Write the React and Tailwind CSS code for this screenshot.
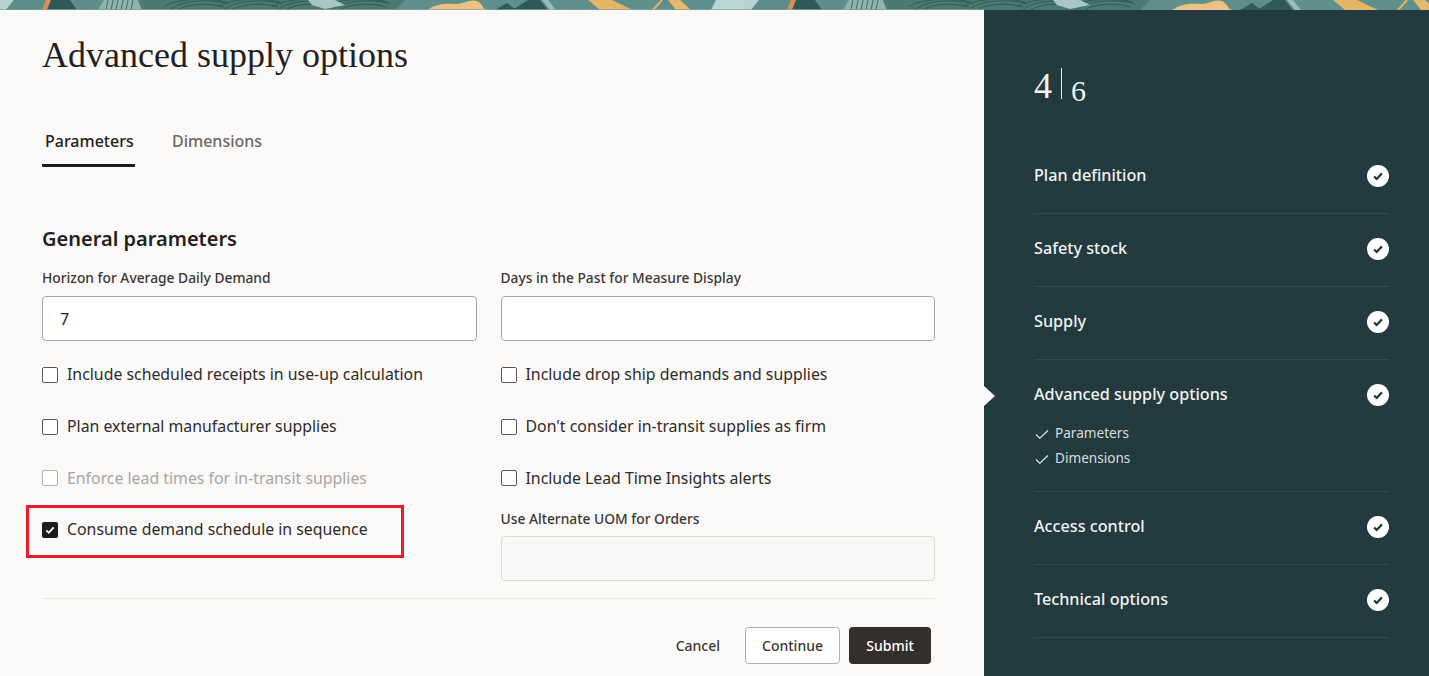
import React from 'react';

const sans = { fontFamily: '"Noto Sans", "Open Sans", sans-serif' };
const serif = { fontFamily: '"Liberation Serif", serif' };

const arcs = [178, 232, 286, 340];

// one repeat of the decorative strip, it comes back every 745px
const BannerTile = ({ x = 0 }) => (
  <g transform={`translate(${x} 0)`}>
    <polygon points="0,0 14,0 6,10 0,10" fill="#b6d2d2" />
    <polygon points="14,0 50,0 43,10 6,10" fill="#5d8d88" />
    <polygon points="46,0 51,0 47,10 42,10" fill="#e28d4e" />
    <polygon points="51,0 70,0 77,10 47,10" fill="#2f5a58" />
    <polygon points="77,0 100,0 92,10 77,10" fill="#5d8d88" />
    <polygon points="104,0 138,0 142,10 98,10" fill="#8fb3af" />
    {[108, 113, 118, 123, 128, 133].map((h) => (
      <path key={h} d={`M${h} 0l-2 10`} stroke="#3f6b68" strokeWidth="1" />
    ))}
    <polygon points="138,0 420,0 410,10 142,10" fill="#4a7a74" />
    {arcs.map((a) => (
      <g key={a} fill="none" stroke="#2c5552" strokeWidth="0.9">
        <path d={`M${a - 8} 10c8 -9 40 -12 58 -6`} />
        <path d={`M${a} 10c8 -6 30 -8 46 -3`} />
        <path d={`M${a - 14} 7c10 -8 42 -10 62 -5`} />
      </g>
    ))}
    <polygon points="308,0 335,0 345,5 325,9 312,5" fill="#a9c6c4" />
    <polygon points="405,0 590,0 600,10 395,10" fill="#5f8f8a" />
    <path d="M428 10c6 -6 18 -7 28 -6c8 0 14 -5 20 -3c5 1 7 6 9 9z" fill="#eac27f" />
    <rect x="428" y="9" width="58" height="1" fill="#f2c2b0" />
    <polygon points="495,10 507,3 516,10" fill="#2f5a58" />
    <polygon points="512,10 528,0 540,0 548,10" fill="#2f5a58" />
    <polygon points="542,0 548,0 556,10 550,10" fill="#9dbdbb" />
    <polygon points="588,0 612,0 633,10 600,10" fill="#e6b465" />
    <path d="M662 0l-9 10" stroke="#e6b465" strokeWidth="2" />
    <polygon points="668,0 680,0 691,10 676,10" fill="#e8b96d" />
    <polygon points="700,0 745,0 745,10 700,10" fill="#5f8f8a" />
    <polygon points="716,0 745,0 745,10 711,10" fill="#bad5d6" />
  </g>
);

const Banner = () => (
  <svg viewBox="0 0 1429 10" preserveAspectRatio="none" className="block w-full h-[10px]">
    <rect width="1429" height="10" fill="#5f8f8a" />
    <BannerTile />
    <BannerTile x={745} />
    <rect y="9.3" width="984" height="0.7" fill="#7fa3a1" />
  </svg>
);

const Checkbox = ({ checked, disabled }) => {
  if (checked) {
    return (
      <span className="flex items-center justify-center w-4 h-4 rounded-[2px] bg-[#1d1b19] shrink-0">
        <svg viewBox="0 0 16 16" className="w-3 h-3" fill="none" stroke="#fff" strokeWidth="2.4">
          <path d="M3 8.5l3.3 3L13 4.5" />
        </svg>
      </span>
    );
  }
  return (
    <span className={`block w-4 h-4 rounded-[2px] border-[1.5px] bg-white shrink-0 ${disabled ? 'border-[#b5b2ae]' : 'border-[#5a5754]'}`} />
  );
};

const CheckRow = ({ label, checked, disabled }) => (
  <label className={`flex items-center gap-[9px] h-[22px] text-[15.85px] ${disabled ? 'text-[#a9a6a2]' : 'text-[#2e2b28]'}`}>
    <Checkbox checked={checked} disabled={disabled} />
    <span>{label}</span>
  </label>
);

const Step = ({ label, children, height = 'h-[73px]' }) => (
  <div className={`border-b border-[#2f4c50] ${height}`}>
    <div className="flex items-center justify-between h-[72px] pb-[4px]">
      <span className="text-[16.2px] font-medium text-[#f1f3f2]">{label}</span>
      <span className="flex items-center justify-center w-[22px] h-[22px] mt-[2px] rounded-full bg-white">
        <svg viewBox="0 0 16 16" className="w-[14px] h-[14px]" fill="none" stroke="#223a3f" strokeWidth="2.5">
          <path d="M3.5 8.5l3 2.8 6-6.3" />
        </svg>
      </span>
    </div>
    {children}
  </div>
);

const SubStep = ({ label }) => (
  <div className="flex items-center gap-[5px] h-[25px] text-[13.6px] text-[#d9dedd]">
    <svg viewBox="0 0 16 16" className="w-[16px] h-[16px]" fill="none" stroke="#e4e8e7" strokeWidth="1.2">
      <path d="M2 8.5l3.8 3.7L14 4.5" />
    </svg>
    <span>{label}</span>
  </div>
);

export default function App() {
  return (
    <div className="w-[1429px] h-[676px] overflow-hidden flex flex-col bg-[#fbf9f8]" style={sans}>
      <Banner />
      <div className="flex flex-1 min-h-0">
        <main className="w-[984px] shrink-0 pl-[42px] pr-[49px]">
          <h1 className="mt-[24px] text-[36px] leading-[42px] text-[#23201e]" style={serif}>
            Advanced supply options
          </h1>

          <div className="flex mt-[45px] text-[16px] font-medium">
            <div className="w-[93px] h-[46px] pl-[3px] pt-[8px] border-b-[3px] border-[#1d1b19] rounded-b-[1px] text-[#23201e]">Parameters</div>
            <div className="ml-[37px] pt-[8px] text-[#6b6865]">Dimensions</div>
          </div>

          <h2 className="mt-[58px] text-[20px] leading-[28px] font-semibold text-[#23201e]">General parameters</h2>

          <div className="grid grid-cols-2 gap-x-[24px] mt-[15px]">
            <div>
              <div className="text-[13.8px] leading-[20px] font-medium text-[#3a3734]">Horizon for Average Daily Demand</div>
              <div className="mt-[8px] h-[45px] px-[17px] flex items-center rounded-[4px] border border-[#a8a5a1] bg-white text-[16px] text-[#23201e]">7</div>
            </div>
            <div>
              <div className="text-[13.8px] leading-[20px] font-medium text-[#3a3734]">Days in the Past for Measure Display</div>
              <div className="mt-[8px] h-[45px] rounded-[4px] border border-[#a8a5a1] bg-white" />
            </div>
          </div>

          <div className="grid grid-cols-2 gap-x-[24px] mt-[23px]">
            <div className="flex flex-col gap-[29.7px]">
              <CheckRow label="Include scheduled receipts in use-up calculation" />
              <CheckRow label="Plan external manufacturer supplies" />
              <CheckRow label="Enforce lead times for in-transit supplies" disabled />
              <div className="relative">
                <CheckRow label="Consume demand schedule in sequence" checked />
                <div className="absolute left-[-16px] top-[-14px] w-[378px] h-[53px] border-[3px] border-[#ea1c2a]" />
              </div>
            </div>
            <div className="flex flex-col gap-[29.7px]">
              <CheckRow label="Include drop ship demands and supplies" />
              <CheckRow label="Don't consider in-transit supplies as firm" />
              <CheckRow label="Include Lead Time Insights alerts" />
              <div className="mt-[-10px]">
                <div className="text-[13.8px] leading-[20px] font-medium text-[#3a3734]">Use Alternate UOM for Orders</div>
                <div className="mt-[7px] h-[45px] rounded-[4px] border border-[#dcdad7] bg-[#faf8f7]" />
              </div>
            </div>
          </div>

          <div className="mt-[17px] border-t border-[#e9e7e4]" />

          <div className="flex items-center justify-end mt-[28px] pr-[4px] text-[14px] font-medium">
            <button className="mr-[25px] text-[#3a3734]">Cancel</button>
            <button className="w-[95px] h-[37px] rounded-[4px] border border-[#b3b0ac] bg-white text-[#3a3734]">Continue</button>
            <button className="ml-[9px] w-[82px] h-[37px] rounded-[4px] bg-[#332f2c] text-white">Submit</button>
          </div>
        </main>

        <aside className="relative flex-1 bg-[#233a3f] pl-[50px] pr-[40px]">
          <div className="absolute left-0 top-[376px] w-0 h-0 border-y-[10px] border-y-transparent border-l-[11px] border-l-[#fbf9f8]" />
          <div className="flex items-start h-[131px] pt-[57px] text-[#f4f5f4]" style={serif}>
            <span className="text-[36px] leading-[38px]">4</span>
            <span className="ml-[9px] mt-[1px] w-px h-[31px] bg-[#e4e8e7]" />
            <span className="ml-[9px] mt-[7px] text-[30px] leading-[34px]">6</span>
          </div>
          <Step label="Plan definition" />
          <Step label="Safety stock" />
          <Step label="Supply" />
          <Step label="Advanced supply options" height="h-[132px]">
            <div className="mt-[-11px]">
              <SubStep label="Parameters" />
              <SubStep label="Dimensions" />
            </div>
          </Step>
          <Step label="Access control" />
          <Step label="Technical options" />
        </aside>
      </div>
    </div>
  );
}
